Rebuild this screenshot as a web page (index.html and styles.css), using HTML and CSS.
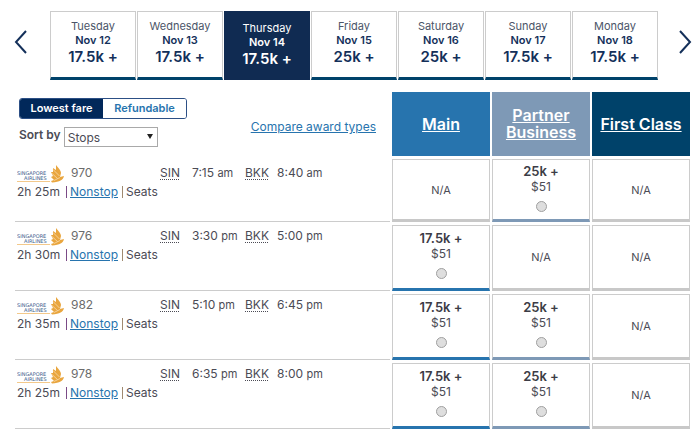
FILE: index.html
```
<!DOCTYPE html>
<html lang="en">
<head>
    <meta charset="UTF-8">
    <meta name="viewport" content="width=device-width, initial-scale=1.0">
    <title>Select flights</title>
    <link rel="stylesheet" href="styles.css">
</head>
<body>
    <!-- bird and underline of the airline logo -->
    <svg class="defs" width="0" height="0" aria-hidden="true">
        <symbol id="sq-bird" viewBox="0 0 47 18">
            <path d="M0 16.500H33" stroke="#f3c98b" fill="none"/>
            <path d="M39 0C41 3 44 5 44 8L43 12L47 11C46 15 43 17 35 17.500L34 16L37 15L34 12L36 11L34 7L36 7L36 3L39 5Z" fill="#e9a63f"/>
            <path d="M36 4.500L42.500 11M35 8.500L40.500 13.500M37 15.500L43 12.500" stroke="#fae3bd" stroke-width="0.700" fill="none"/>
        </symbol>
    </svg>

    <div class="calendar">
        <button class="arrow" aria-label="Previous dates">
            <svg width="14" height="24" viewBox="0 0 14 24"><path d="M12 1L2 12L12 23"/></svg>
        </button>
        <div class="days">
            <button class="day"><span>Tuesday</span><b>Nov 12</b><strong>17.5k +</strong></button>
            <button class="day"><span>Wednesday</span><b>Nov 13</b><strong>17.5k +</strong></button>
            <button class="day selected"><span>Thursday</span><b>Nov 14</b><strong>17.5k +</strong></button>
            <button class="day"><span>Friday</span><b>Nov 15</b><strong>25k +</strong></button>
            <button class="day"><span>Saturday</span><b>Nov 16</b><strong>25k +</strong></button>
            <button class="day"><span>Sunday</span><b>Nov 17</b><strong>17.5k +</strong></button>
            <button class="day"><span>Monday</span><b>Nov 18</b><strong>17.5k +</strong></button>
        </div>
        <button class="arrow" aria-label="Next dates">
            <svg width="14" height="24" viewBox="0 0 14 24"><path d="M2 1L12 12L2 23"/></svg>
        </button>
    </div>

    <table class="fares">
        <thead>
            <tr>
                <td class="tools">
                    <div class="toggle">
                        <button class="on">Lowest fare</button>
                        <button>Refundable</button>
                    </div>
                    <div class="sort-row">
                        <label for="sort">Sort by</label>
                        <span class="select">
                            <select id="sort">
                                <option>Stops</option>
                                <option>Price</option>
                                <option>Departure</option>
                                <option>Arrival</option>
                            </select>
                        </span>
                        <a class="compare" href="#">Compare award types</a>
                    </div>
                </td>
                <th class="main" scope="col"><a href="#">Main</a></th>
                <th class="business" scope="col"><a href="#">Partner Business</a></th>
                <th class="first" scope="col"><a href="#">First Class</a></th>
            </tr>
        </thead>
        <tbody>
            <tr class="top-row">
                <td class="flight">
                    <div class="times">
                        <svg class="logo" viewBox="0 0 47 18"><text x="0" y="10">SINGAPORE</text><text x="7" y="15">AIRLINES</text><use href="#sq-bird"/></svg>
                        <span class="number">970</span>
                        <abbr title="Singapore">SIN</abbr><span>7:15 <small>am</small></span>
                        <abbr title="Bangkok">BKK</abbr><span>8:40 <small>am</small></span>
                    </div>
                    <div class="details"><span class="length">2h 25m</span><span class="stops"><a href="#">Nonstop</a></span><span class="seats">Seats</span></div>
                </td>
                <td class="fare">N/A</td>
                <td class="fare business"><label><b>25k +</b><span>$51</span><input type="radio" name="fare"></label></td>
                <td class="fare">N/A</td>
            </tr>
            <tr>
                <td class="flight">
                    <div class="times">
                        <svg class="logo" viewBox="0 0 47 18"><text x="0" y="10">SINGAPORE</text><text x="7" y="15">AIRLINES</text><use href="#sq-bird"/></svg>
                        <span class="number">976</span>
                        <abbr title="Singapore">SIN</abbr><span>3:30 <small>pm</small></span>
                        <abbr title="Bangkok">BKK</abbr><span>5:00 <small>pm</small></span>
                    </div>
                    <div class="details"><span class="length">2h 30m</span><span class="stops"><a href="#">Nonstop</a></span><span class="seats">Seats</span></div>
                </td>
                <td class="fare main"><label><b>17.5k +</b><span>$51</span><input type="radio" name="fare"></label></td>
                <td class="fare">N/A</td>
                <td class="fare">N/A</td>
            </tr>
            <tr>
                <td class="flight">
                    <div class="times">
                        <svg class="logo" viewBox="0 0 47 18"><text x="0" y="10">SINGAPORE</text><text x="7" y="15">AIRLINES</text><use href="#sq-bird"/></svg>
                        <span class="number">982</span>
                        <abbr title="Singapore">SIN</abbr><span>5:10 <small>pm</small></span>
                        <abbr title="Bangkok">BKK</abbr><span>6:45 <small>pm</small></span>
                    </div>
                    <div class="details"><span class="length">2h 35m</span><span class="stops"><a href="#">Nonstop</a></span><span class="seats">Seats</span></div>
                </td>
                <td class="fare main"><label><b>17.5k +</b><span>$51</span><input type="radio" name="fare"></label></td>
                <td class="fare business"><label><b>25k +</b><span>$51</span><input type="radio" name="fare"></label></td>
                <td class="fare">N/A</td>
            </tr>
            <tr>
                <td class="flight">
                    <div class="times">
                        <svg class="logo" viewBox="0 0 47 18"><text x="0" y="10">SINGAPORE</text><text x="7" y="15">AIRLINES</text><use href="#sq-bird"/></svg>
                        <span class="number">978</span>
                        <abbr title="Singapore">SIN</abbr><span>6:35 <small>pm</small></span>
                        <abbr title="Bangkok">BKK</abbr><span>8:00 <small>pm</small></span>
                    </div>
                    <div class="details"><span class="length">2h 25m</span><span class="stops"><a href="#">Nonstop</a></span><span class="seats">Seats</span></div>
                </td>
                <td class="fare main"><label><b>17.5k +</b><span>$51</span><input type="radio" name="fare"></label></td>
                <td class="fare business"><label><b>25k +</b><span>$51</span><input type="radio" name="fare"></label></td>
                <td class="fare">N/A</td>
            </tr>
        </tbody>
    </table>
</body>
</html>
```
FILE: styles.css
```
*, *::before, *::after {
    box-sizing: border-box;
}
body {
    margin: 0;
    padding: 11px 4px 0 13px;
    background: #fff;
    color: #4b4b55;
    font-family: Inter, "Liberation Sans", sans-serif;
    font-size: 12px;
    line-height: 16px;
}
button, select {
    font-family: inherit;
    cursor: pointer;
}
a {
    color: #2774ae;
}
.defs {
    position: absolute;
}

/* date strip */
.calendar {
    display: flex;
    justify-content: space-between;
    padding-bottom: 9px;
}
.arrow {
    width: 37px;
    padding: 0 0 8px 1px;
    border: 0;
    background: none;
    text-align: left;
}
.arrow:last-child {
    width: 34px;
    padding: 0 0 8px;
    text-align: right;
}
.arrow svg {
    vertical-align: middle;
}
.arrow path {
    fill: none;
    stroke: #14305a;
    stroke-width: 2;
}
.days {
    flex: 1;
    display: flex;
    gap: 1px;
}
.day {
    flex: 1 1 0;
    min-width: 0;
    height: 69px;
    padding: 0 0 4px;
    border: 1px solid #ccc;
    border-bottom: 3px solid #00426a;
    background: #fff;
    color: #14305a;
    text-align: center;
}
.day span, .day b, .day strong {
    display: block;
    font-size: 11px;
    line-height: 14px;
}
.day span {
    color: #4b5568;
}
.day b {
    font-weight: 600;
}
.day strong {
    font-size: 15px;
    font-weight: 600;
    line-height: 20px;
}
.day.selected {
    padding: 0;
    border-color: #102b52;
    background: #102b52;
    color: #fff;
}
.day.selected span {
    color: #fff;
}

/* fares */
.fares {
    width: 100%;
    table-layout: fixed;
    border-spacing: 2px 3px;
}
.fares td, .fares th {
    padding: 0;
}
.fares th {
    width: 98px;
    height: 64px;
    color: #fff;
    font-size: 16px;
    font-weight: 600;
    line-height: 17px;
}
.fares th a {
    color: inherit;
}
th.main {
    background: #2774ae;
}
th.business {
    background: #7e99b6;
}
th.first {
    background: #00426a;
}
.fares .tools {
    padding: 6px 14px 0 4px;
    vertical-align: top;
}
.toggle {
    display: flex;
    width: 168px;
    height: 21px;
    margin-bottom: 8px;
    border: 1px solid #2c4f85;
    border-radius: 3px;
    overflow: hidden;
}
.toggle button {
    flex: 1;
    padding: 0 0 2px;
    border: 0;
    background: #fff;
    color: #2774ae;
    font-size: 11px;
    font-weight: 600;
}
.toggle .on {
    background: #01285a;
    color: #fff;
}
.sort-row {
    display: flex;
    align-items: flex-start;
}
.sort-row label {
    margin-right: 3px;
    font-weight: 600;
}
.select {
    position: relative;
}
.select::after {
    content: "";
    position: absolute;
    top: 7px;
    right: 5px;
    border: 3px solid transparent;
    border-top: 5px solid #222;
    border-bottom: 0;
    pointer-events: none;
}
.select select {
    display: block;
    width: 94px;
    height: 20px;
    padding: 0 3px;
    border: 1px solid #a9a9a9;
    border-radius: 0;
    background: #fff;
    color: #4b4b55;
    font-size: 12px;
    appearance: none;
}
.compare {
    margin: -8px 0 0 auto;
}

.flight {
    border-bottom: 1px solid #ccc;
    vertical-align: top;
}
.fares .flight {
    padding: 2px 0 0 2px;
}
.fares .top-row .flight {
    padding-top: 5px;
}
.times {
    display: grid;
    grid-template-columns: 54px 89px 32px 53px 32px auto;
    justify-content: start;
    height: 19px;
}
.times span, .times abbr {
    line-height: 18px;
}
.times abbr {
    justify-self: start;
    text-underline-offset: 2px;
}
.times small {
    font-size: 11px;
}
.times .number {
    color: #6b6b6b;
}
.logo {
    width: 47px;
    height: 18px;
    margin-top: 1px;
}
.logo text {
    fill: #3a5a8a;
    font-family: "DejaVu Sans", sans-serif;
    font-size: 5px;
}
.details {
    display: flex;
    line-height: 18px;
}
.length {
    width: 49px;
}
.stops, .seats {
    padding-left: 4px;
    background: linear-gradient(#7b4a86, #7b4a86) 0 3px / 1px 12px no-repeat;
}
.seats {
    margin-left: 4px;
    background-image: linear-gradient(#a08a70, #a08a70);
}

.fare {
    height: 66px;
    border: 1px solid #ccc;
    border-bottom: 3px solid #c8c8c8;
    font-size: 11px;
    text-align: center;
    vertical-align: middle;
}
.fare.main {
    border-bottom-color: #2774ae;
}
.fare.business {
    border-bottom-color: #7e99b6;
}
.top-row .fare {
    height: 63px;
}
.fare label {
    display: block;
    padding-bottom: 5px;
    font-size: 12px;
}
.fare b, .fare label span {
    display: block;
}
.fare b {
    color: #3c3c46;
    font-size: 13px;
    font-weight: 600;
}
.fare input {
    display: block;
    width: 11px;
    height: 11px;
    margin: 6px auto 0;
    border: 1px solid #a0a0a0;
    border-radius: 50%;
    background: #dedede;
    appearance: none;
}
.fare input:checked {
    background: #2774ae;
}
```
